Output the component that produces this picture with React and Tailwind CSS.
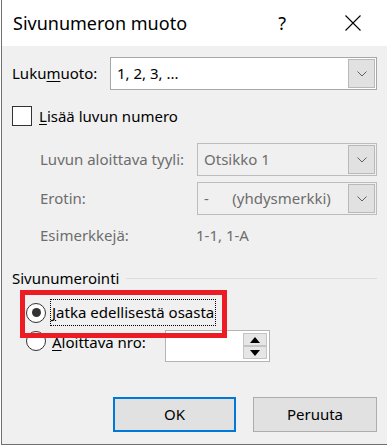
import React from 'react'

const font = { fontFamily: '"Noto Sans", "Open Sans", sans-serif' }

function Chevron({ color = '#606060' }) {
  return (
    <svg width="10" height="6" viewBox="0 0 10 6" className="block">
      <path d="M0.5 0.5 L5 5 L9.5 0.5" fill="none" stroke={color} strokeWidth="1" />
    </svg>
  )
}

function Select({ value, width, disabled }) {
  return (
    <div className={`flex h-[33px] items-center border ${disabled ? 'border-[#bcbcbc] bg-[#f0f0f0] text-[#6d6d6d]' : 'border-[#a7a7a7] bg-white text-black'}`}
      style={{ width }}>
      <div className="flex-1 pl-[6px] whitespace-pre">{value}</div>
      <div className="mr-[1px] flex h-[29px] w-[27px] items-center justify-center border border-[#b9b9b9] bg-[#e1e1e1]">
        <Chevron />
      </div>
    </div>
  )
}

function Radio({ checked, className = '' }) {
  return (
    <div className={`flex h-[20px] w-[20px] shrink-0 items-center justify-center rounded-full border border-[#333] bg-white ${className}`}>
      {checked && <div className="h-[9px] w-[9px] rounded-full bg-[#333]" />}
    </div>
  )
}

export default function App() {
  return (
    <div className="h-[446px] w-[387px] overflow-hidden bg-white text-[15px] leading-none text-black" style={font}>
      <div className="ml-px flex h-[445px] flex-col border-b border-l border-[#707070]">
        {/* otsikkorivi */}
        <div className="flex h-[46px] shrink-0 items-center bg-white">
          <div className="flex-1 pl-[11px] text-[18px]">Sivunumeron muoto</div>
          <div className="mr-[59px] text-[18px]">?</div>
          <svg width="16" height="16" viewBox="0 0 16 16" className="mr-[26px]">
            <path d="M0.5 0.5 L15.5 15.5 M15.5 0.5 L0.5 15.5" stroke="#000" strokeWidth="1.1" />
          </svg>
        </div>

        <div className="flex flex-1 flex-col bg-[#f0f0f0] pl-[10px] pr-[10px]">
          <div className="mt-[11px] flex items-center">
            <div className="w-[98px]">Luku<span className="underline underline-offset-2">m</span>uoto:</div>
            <Select value="1, 2, 3, ..." width={267} />
          </div>

          <div className="mt-[16px] flex items-center">
            <div className="h-[20px] w-[20px] border border-[#333] bg-white" />
            <div className="ml-[7px]"><span className="underline underline-offset-2">L</span>isää luvun numero</div>
          </div>

          <div className="mt-[17px] flex items-center pl-[28px] text-[#6d6d6d]">
            <div className="flex-1">Luvun aloittava tyyli:</div>
            <Select value="Otsikko 1" width={180} disabled />
          </div>
          <div className="mt-[6px] flex items-center pl-[28px] text-[#6d6d6d]">
            <div className="flex-1">Erotin:</div>
            <Select value={'-      (yhdysmerkki)'} width={180} disabled />
          </div>
          <div className="mt-[10px] flex h-[20px] items-center pl-[28px] text-[#6d6d6d]">
            <div className="w-[156px]">Esimerkkejä:</div>
            <div>1-1, 1-A</div>
          </div>

          {/* ryhmä */}
          <div className="relative mt-[26px]">
            <div className="flex items-center">
              <div>Sivunumerointi</div>
              <div className="ml-[7px] h-px flex-1 bg-[#dcdcdc]" />
            </div>

            <div className="mt-[13px] flex items-center pl-[14px]">
              <Radio checked />
              <div className="ml-[4px] border border-dotted border-black px-[1px] py-[5px]">
                <span className="underline underline-offset-2">J</span>atka edellisestä osasta
              </div>
            </div>

            <div className="mt-[4px] flex items-start pl-[14px]">
              <Radio className="mt-[1px]" />
              <div className="ml-[6px] mt-[5px] w-[113px]"><span className="underline underline-offset-2">A</span>loittava nro:</div>
              <div className="flex h-[32px] w-[105px] items-center justify-end border border-[#b4b4b4] bg-white pr-[2px]">
                <div className="flex flex-col">
                  <div className="flex h-[13px] w-[24px] items-center justify-center border border-[#c4c4c4] bg-[#e6e6e6]">
                    <svg width="10" height="6" viewBox="0 0 10 6"><path d="M5 0 L10 6 L0 6 Z" fill="#000" /></svg>
                  </div>
                  <div className="flex h-[13px] w-[24px] items-center justify-center border border-[#c4c4c4] bg-[#e6e6e6]">
                    <svg width="10" height="6" viewBox="0 0 10 6"><path d="M0 0 L10 0 L5 6 Z" fill="#000" /></svg>
                  </div>
                </div>
              </div>
            </div>

            {/* punainen korostus */}
            <div className="pointer-events-none absolute left-[8px] top-[19px] h-[48px] w-[207px] border-[5px] border-[#ed1c24]" />
          </div>

          <div className="mt-auto mb-[12px] flex justify-end gap-[17px]">
            <button className="h-[35px] w-[123px] border-2 border-[#0078d7] bg-[#e1e1e1]">OK</button>
            <button className="h-[35px] w-[124px] border border-[#adadad] bg-[#e1e1e1]">Peruuta</button>
          </div>
        </div>
      </div>
    </div>
  )
}
